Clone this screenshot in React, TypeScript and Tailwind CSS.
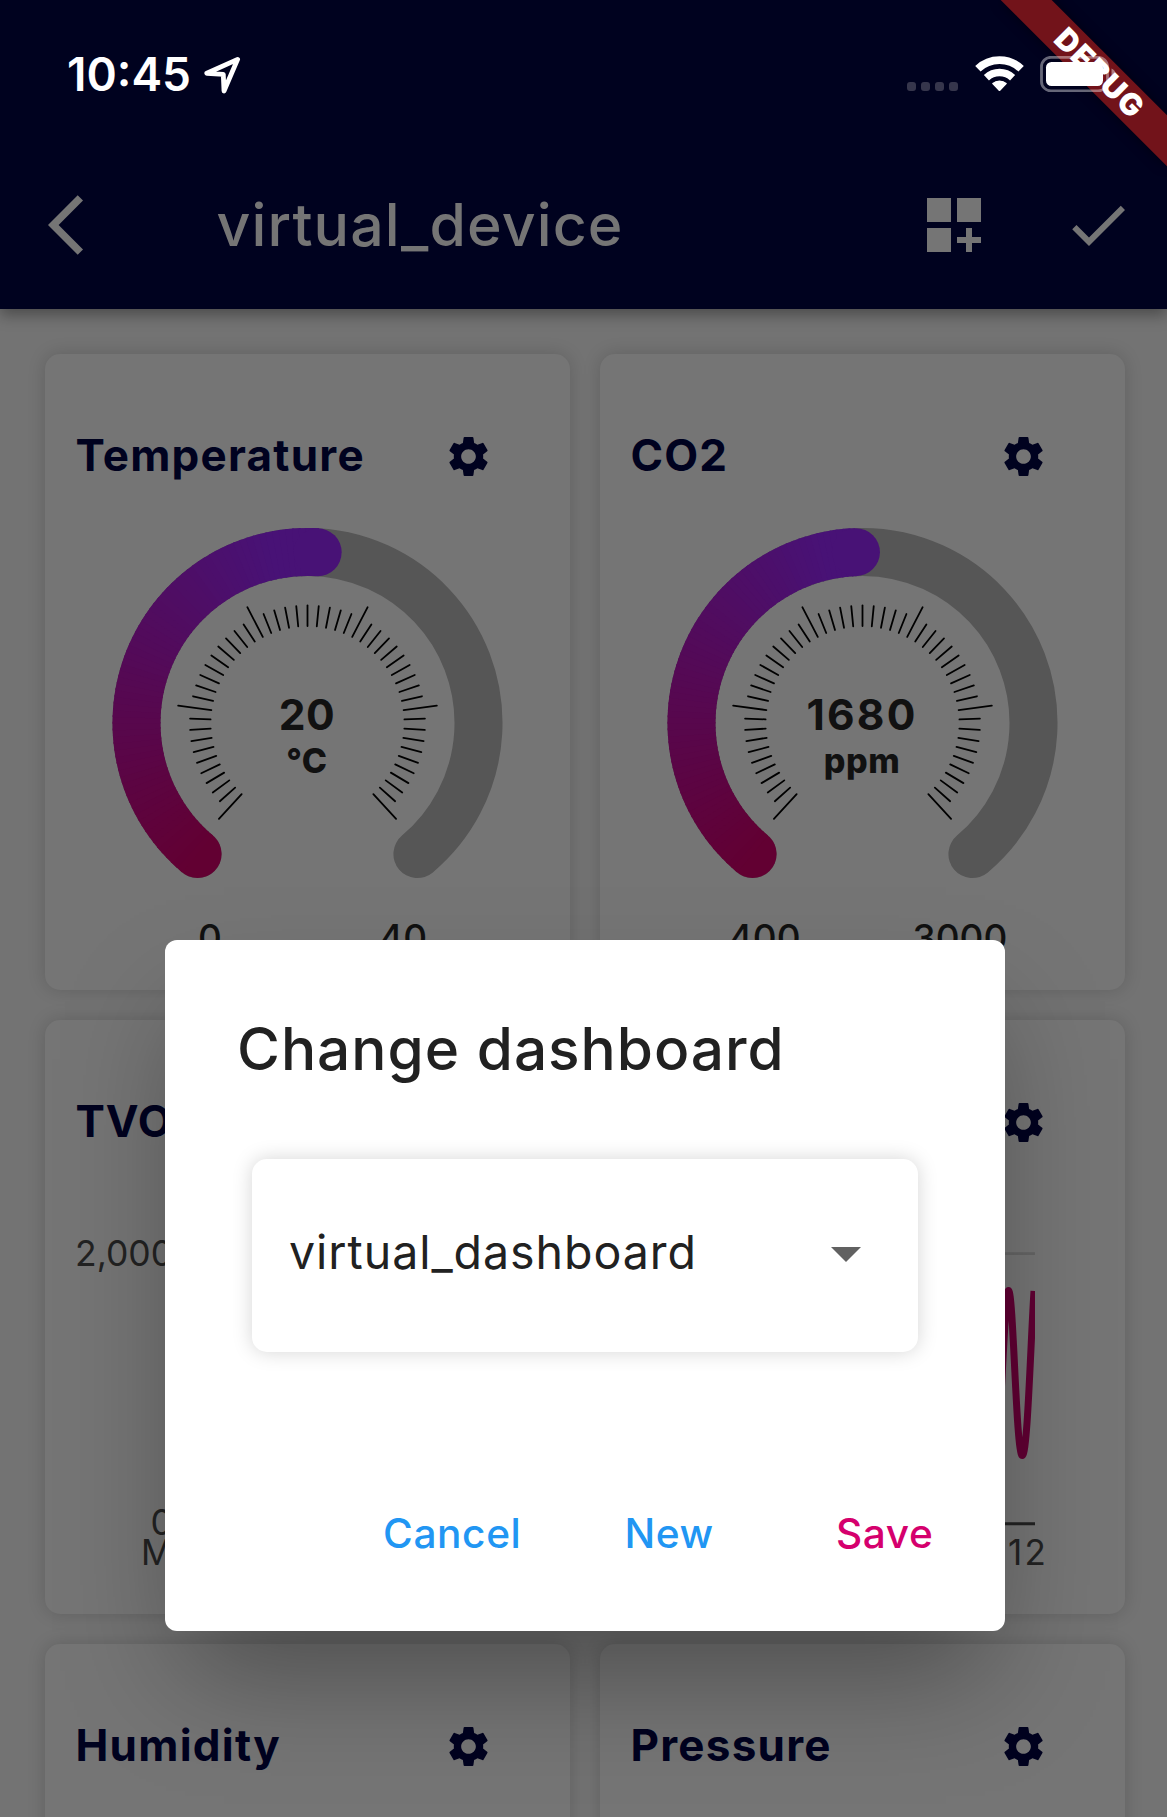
import type { ReactNode } from 'react';
import { MdSettings } from 'react-icons/md';

const polar = (cx: number, cy: number, r: number, deg: number) => {
  const a = (deg * Math.PI) / 180;
  return [cx + r * Math.sin(a), cy - r * Math.cos(a)];
};

// Angles are measured clockwise from twelve o'clock.
const arc = (cx: number, cy: number, r: number, from: number, to: number) => {
  const [x1, y1] = polar(cx, cy, r, from);
  const [x2, y2] = polar(cx, cy, r, to);
  return `M${x1} ${y1}A${r} ${r} 0 ${to - from > 180 ? 1 : 0} 1 ${x2} ${y2}`;
};

const START = -140;
const PINK = [98, 0, 50];
const PURPLE = [72, 18, 118];

const shade = (deg: number) => {
  const t = Math.min(1, Math.max(0, (deg - START) / 128));
  return `rgb(${PINK.map((c, i) => Math.round(c + (PURPLE[i] - c) * t)).join(',')})`;
};

function Gauge({ end }: { end: number }) {
  const steps = 72;
  const size = (end - START) / steps;
  const [sx, sy] = polar(200.5, 200, 171, START);
  const [ex, ey] = polar(200.5, 200, 171, end);
  return (
    <svg width="400" height="400" viewBox="0 0 400 400" fill="none">
      <path d={arc(200.5, 200, 171, -140, 140)} stroke="#565656" strokeWidth="48" strokeLinecap="round" />
      <circle cx={sx} cy={sy} r="24" fill={shade(START)} />
      {Array.from({ length: steps }, (_, i) => {
        const a = START + i * size;
        return (
          <path
            key={i}
            d={arc(200.5, 200, 171, a, Math.min(end, a + size + 0.6))}
            stroke={shade(a + size / 2)}
            strokeWidth="48"
          />
        );
      })}
      <circle cx={ex} cy={ey} r="24" fill={shade(end)} />
      {Array.from({ length: 51 }, (_, i) => {
        const a = -137.25 + i * 5.49;
        const [x1, y1] = polar(200.5, 200, 97, a);
        const [x2, y2] = polar(200.5, 200, i % 10 === 0 ? 130.5 : 117.5, a);
        return <line key={i} x1={x1} y1={y1} x2={x2} y2={y2} stroke="#000" strokeWidth="1.8" strokeLinecap="round" />;
      })}
    </svg>
  );
}

function Card({ title, className = '', children }: { title: ReactNode; className?: string; children?: ReactNode }) {
  return (
    <section className={`rounded-[15px] bg-[#757575] pt-20 shadow-[0_0_18px_rgba(0,0,0,0.16)] ${className}`}>
      <div className="flex h-11 items-center justify-between pr-[77px] pl-[30.5px] text-[#00021f]">
        <h2 className="-mt-[2px] text-[44px] leading-[44px] font-bold">{title}</h2>
        <MdSettings size={49} className="shrink-0" />
      </div>
      {children}
    </section>
  );
}

function StatusBar() {
  return (
    <div className="flex h-[141px] items-start justify-between pl-[67px] text-white">
      <div className="flex pt-[51px]">
        <span className="w-[137px] text-[46px] leading-[46px] font-semibold">10:45</span>
        <svg width="38" height="38" viewBox="0 0 38 38" className="mt-[5px]" fill="none" stroke="currentColor" strokeWidth="4.8" strokeLinejoin="round">
          <path d="M33.6 3.4 2.8 17.3 19.3 18.3 20 35z" />
        </svg>
      </div>
      <div className="relative z-20 flex h-9 w-[260px] items-start pt-14">
        <div className="mt-[26px] flex gap-[5px]">
          {[0, 1, 2, 3].map((i) => (
            <span key={i} className="size-[9px] rounded-[3px] bg-[#36364c]" />
          ))}
        </div>
        <svg width="50" height="36" viewBox="0 0 50 36" className="-mt-px ml-[17px]" fill="none" stroke="currentColor">
          <path d={arc(24.5, 36.5, 31.4, -43.5, 43.5)} strokeWidth="7.8" />
          <path d={arc(24.5, 36.5, 19, -43.5, 43.5)} strokeWidth="7.4" />
          <path d="M24.5 35.4 17.9 28.6A10 10 0 0 1 31.1 28.6z" fill="currentColor" strokeWidth="1.4" strokeLinejoin="round" />
        </svg>
        <svg width="78" height="36" viewBox="0 0 78 36" className="ml-[15px]" fill="none">
          <rect x="1.5" y="1.3" width="66" height="33.6" rx="9.5" stroke="#fff" strokeOpacity="0.4" strokeWidth="2.8" />
          <rect x="6" y="6" width="57" height="24" rx="5.5" fill="#fff" />
          <path d="M71.5 12.5c2.6 1.2 4 3 4 5.6s-1.4 4.4-4 5.6z" fill="#fff" fillOpacity="0.45" />
        </svg>
      </div>
    </div>
  );
}

function AppBar() {
  return (
    <div className="flex h-[168px] items-center text-[#757575]">
      <svg width="36" height="72" viewBox="0 0 12 24" fill="currentColor" className="ml-12">
        <path d="M11.67 3.87 9.9 2.1 0 12l9.9 9.9 1.77-1.77L3.54 12z" />
      </svg>
      <h1 className="ml-[132.5px] w-[710.5px] text-[59px] leading-[60px] font-medium tracking-[1.1px]">virtual_device</h1>
      <svg width="54" height="54" viewBox="0 0 54 54" fill="currentColor">
        <path d="M0 0h24v24H0zM30 0h24v24H30zM0 30h24v24H0zM39 30h6v9h9v6h-9v9h-6v-9h-9v-6h9z" />
      </svg>
      <svg width="72" height="72" viewBox="0 0 24 24" fill="currentColor" className="ml-[81px]">
        <path d="M9 16.17 4.83 12l-1.42 1.41L9 19 21 7l-1.41-1.41z" />
      </svg>
    </div>
  );
}

function DebugBanner() {
  return (
    <svg width="180" height="180" viewBox="0 0 180 180" className="absolute top-0 right-0 z-10">
      <path d="M13.7 0H64.7L180 115.3V166.3z" fill="#72131a" className="drop-shadow-[0_0_6px_rgba(0,0,0,0.5)]" />
      <text
        x="0"
        y="11"
        transform="translate(112.8 73) rotate(45)"
        textAnchor="middle"
        fill="#fff"
        className="font-['Inter'] text-[30.5px] font-black tracking-[1.3px]"
      >
        DEBUG
      </text>
    </svg>
  );
}

function Dialog() {
  return (
    <div
      role="dialog"
      className="absolute top-[940px] left-[165px] z-30 flex h-[690.5px] w-[840px] flex-col rounded-xl bg-white pt-[79px] text-[#212121] shadow-[0_60px_110px_-20px_rgba(0,0,0,0.35)]"
    >
      <h2 className="pl-[72px] text-[58.5px] leading-[60px] font-medium tracking-[1px]">Change dashboard</h2>
      <div className="mt-[80px] ml-[87px] flex h-[193px] w-[666px] items-start justify-between rounded-[15px] bg-white pr-[57px] pl-[37px] shadow-[0_0_20px_rgba(0,0,0,0.17)]">
        <span className="mt-[69px] text-[46.5px] leading-[48px] tracking-[0.96px]">virtual_dashboard</span>
        <svg width="30" height="15" viewBox="0 0 30 15" className="mt-[88px]">
          <path d="M0 0h30L15 15z" fill="#616161" />
        </svg>
      </div>
      <div className="mt-[161px] flex pl-[218px] text-[40.6px] leading-[42px] font-medium tracking-[0.63px] text-[#2196f3]">
        <button>Cancel</button>
        <button className="ml-[103px]">New</button>
        <button className="ml-[122px] text-[#d5006d]">Save</button>
      </div>
    </div>
  );
}

export default function App() {
  return (
    <div className="relative h-[1817px] w-[1167px] overflow-hidden bg-[#737373] font-['Inter',sans-serif]">
      <header className="relative h-[309px] bg-[#00021f] shadow-[0_6px_14px_rgba(0,0,0,0.35)]">
        <StatusBar />
        <AppBar />
      </header>
      <DebugBanner />

      <main className="grid grid-cols-2 grid-rows-[636px_594px_300px] gap-[30px] px-[45px] pt-[45px] pr-[42px]">
        <Card title={<span className="tracking-[1.25px]">Temperature</span>} className="w-[525px]">
          <div className="relative mt-[45px] ml-[62px] h-[400px] w-[400px] text-center text-[#111]">
            <Gauge end={3.4} />
            <div className="absolute inset-0 pt-[171px]">
              <p className="text-[42.5px] leading-[42px] font-bold tracking-[0.6px]">20</p>
              <p className="mt-2 text-[34px] leading-[33px] font-extrabold tracking-[0.6px]">°C</p>
            </div>
          </div>
          <div className="-mt-[4px] flex pl-[153px] text-[37px] leading-[37px] font-medium text-[#111]">
            <span className="w-[181px]">0</span>
            <span>40</span>
          </div>
        </Card>

        <Card title={<span className="tracking-[1.1px]">CO2</span>} className="w-[525px]">
          <div className="relative mt-[45px] ml-[62px] h-[400px] w-[400px] text-center text-[#111]">
            <Gauge end={-2.2} />
            <div className="absolute inset-0 pt-[171px]">
              <p className="text-[42.5px] leading-[42px] font-bold tracking-[2.2px]">1680</p>
              <p className="mt-2 text-[34px] leading-[33px] font-extrabold tracking-[0.5px]">ppm</p>
            </div>
          </div>
          <div className="-mt-[4px] flex pl-[128.5px] text-[37px] leading-[37px] font-medium text-[#111]">
            <span className="w-[184px]">400</span>
            <span>3000</span>
          </div>
        </Card>

        <Card title={<span className="tracking-[0.9px]">TVOC</span>} className="col-span-2 w-[1080px]">
          <div className="mt-[94px] flex pl-[30px] text-[35.5px] leading-[30px] text-[#222]">
            <div className="flex h-[300px] w-[98px] flex-col justify-between">
              <span className="relative top-[0.5px]">2,000</span>
              <span className="self-end">0</span>
            </div>
            <svg width="860" height="303" viewBox="0 0 860 303" className="-mt-[3px] ml-[2px]" fill="none">
              <path d="M0 18.7H860" stroke="#656565" strokeWidth="2.8" />
              <path d="M0 288.7H860" stroke="#222" strokeWidth="3" />
              <path
                d="M826 160C829 110 831 55.5 833.5 55.5C838.5 55.5 841 220.5 847.3 220.5C852.5 220.5 855.5 110 859 56"
                stroke="#600033"
                strokeWidth="7"
              />
            </svg>
          </div>
          <div className="-mt-px flex pl-[96px] text-[35px] leading-[30px] text-[#222]">
            <span className="w-[867px]">M</span>
            <span className="tracking-[2.26px]">12</span>
          </div>
        </Card>

        <Card title={<span className="tracking-[1.25px]">Humidity</span>} className="w-[525px]" />
        <Card title={<span className="tracking-[1.25px]">Pressure</span>} className="w-[525px]" />
      </main>

      <Dialog />
    </div>
  );
}
